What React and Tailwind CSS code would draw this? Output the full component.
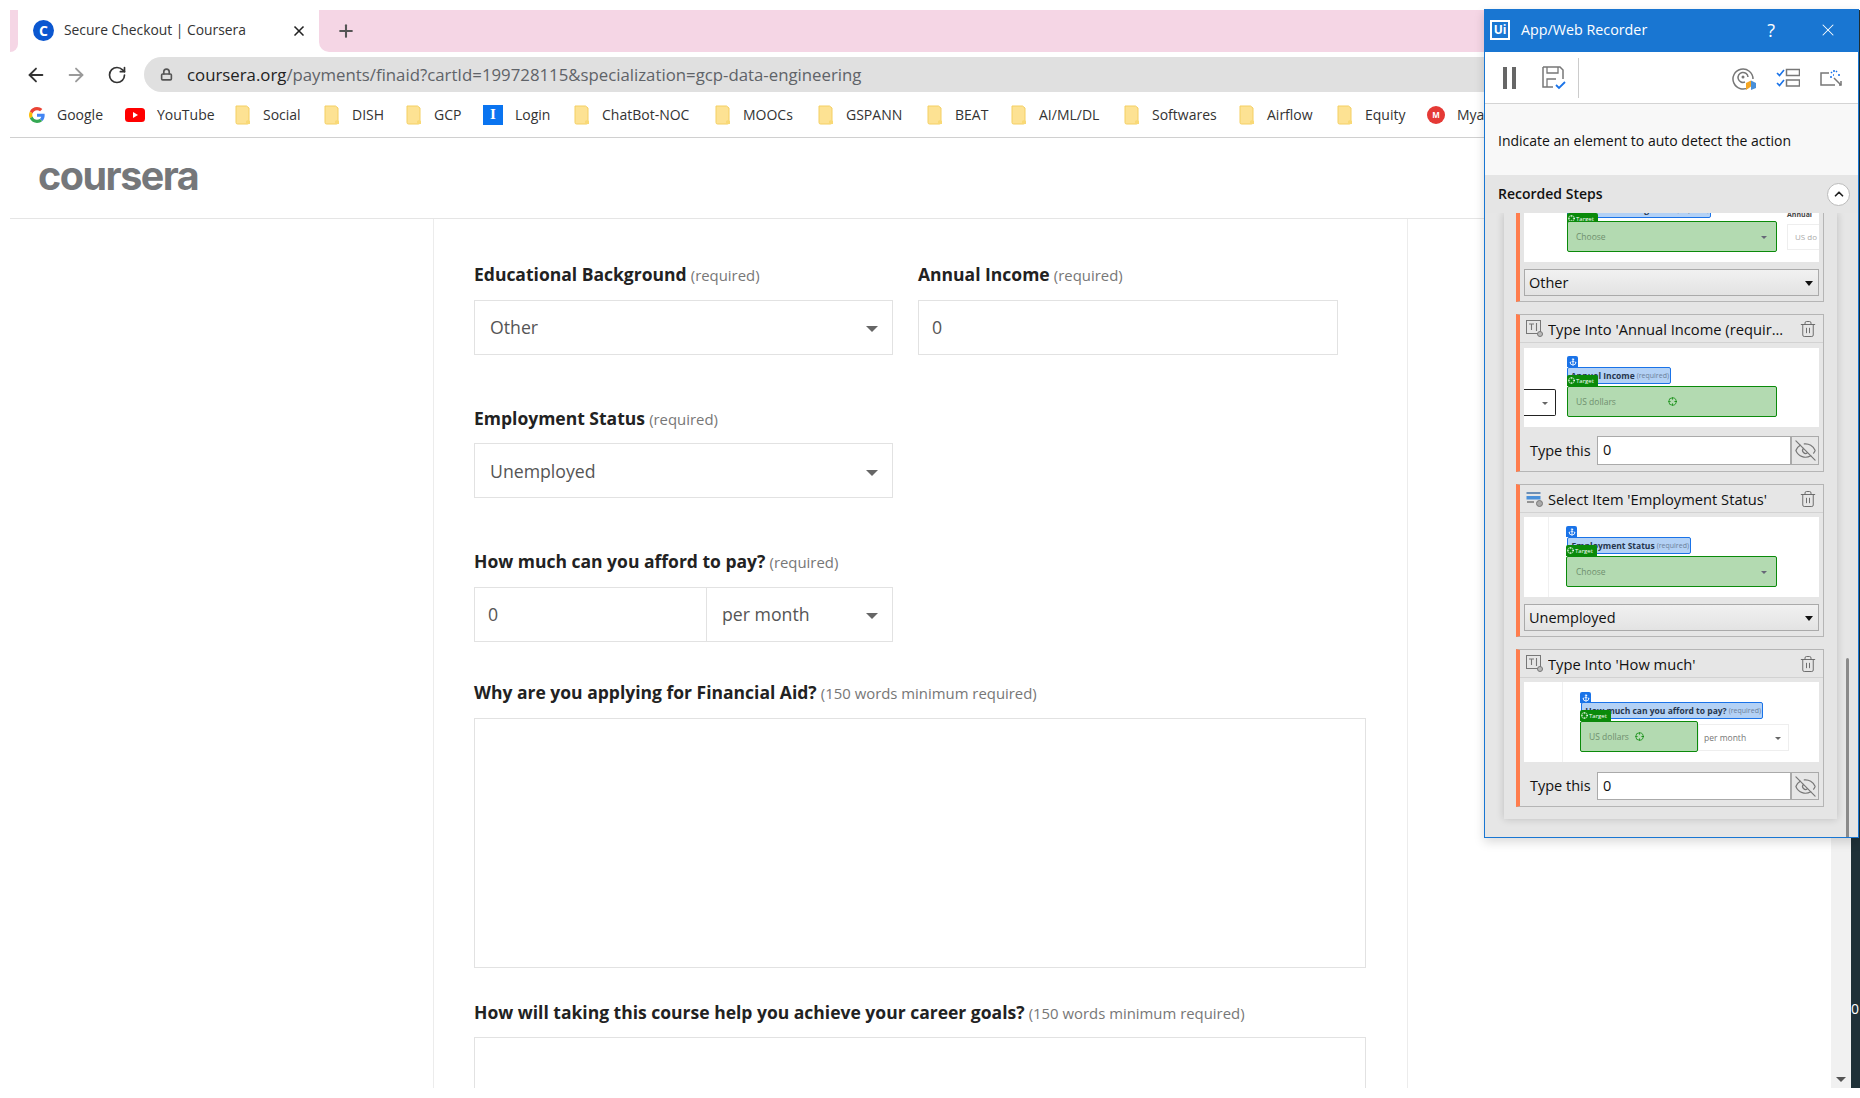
import React from 'react';
import { ArrowLeft, ArrowRight, RotateCw, Lock, X, Plus, Trash2, EyeOff, Anchor, ChevronUp, Crosshair } from 'lucide-react';

const Folder = () => (
  <svg width="16" height="20" viewBox="0 0 16 20" className="shrink-0">
    <path d="M1 1h10.500L14 3v14.500a1.500 1.500 0 0 1-1.500 1.500h-10A1.500 1.500 0 0 1 1 17.500z" fill="#fde293" stroke="#f4cf63" />
    <path d="M11 19v-3l2-1 2 1v3" fill="#f9d976" />
  </svg>
);

const GoogleIcon = () => (
  <svg width="16" height="16" viewBox="0 0 48 48" className="shrink-0">
    <path fill="#EA4335" d="M24 9.500c3.500 0 6.700 1.200 9.200 3.600l6.900-6.900C35.900 2.400 30.500 0 24 0 14.600 0 6.500 5.400 2.600 13.200l8 6.200C12.500 13.600 17.800 9.500 24 9.500z" />
    <path fill="#4285F4" d="M47 24.500c0-1.600-.1-3.100-.4-4.500H24v9h12.900c-.6 3-2.200 5.500-4.700 7.200l7.700 6C44.400 38 47 31.800 47 24.500z" />
    <path fill="#FBBC05" d="M10.600 28.600c-.5-1.400-.8-3-.8-4.600s.3-3.200.8-4.600l-8-6.200C.9 16.500 0 20.100 0 24s.9 7.500 2.600 10.800z" />
    <path fill="#34A853" d="M24 48c6.500 0 11.900-2.100 15.900-5.800l-7.700-6c-2.200 1.400-4.900 2.300-8.200 2.300-6.200 0-11.500-4.100-13.400-9.900l-8 6.200C6.500 42.600 14.600 48 24 48z" />
  </svg>
);

const YoutubeIcon = () => (
  <svg width="20" height="14" viewBox="0 0 20 14" className="shrink-0">
    <rect width="20" height="14" rx="3.500" fill="#f00" />
    <path d="M8 4l5 3-5 3z" fill="#fff" />
  </svg>
);

const LoginIcon = () => (
  <div className="w-[20px] h-[20px] shrink-0 bg-[#0a74f0] flex items-center justify-center text-white font-bold text-[15px] leading-none font-['Liberation_Serif',serif]">I</div>
);

const MyaIcon = () => (
  <div className="w-[18px] h-[18px] shrink-0 rounded-full bg-[#e53935] flex items-center justify-center text-white font-bold text-[8px] leading-none">M</div>
);

const bookmarks = [
  { label: 'Google', icon: <GoogleIcon />, box: 'w-[48px]', next: 'mr-[20px]' },
  { label: 'YouTube', icon: <YoutubeIcon />, box: 'w-[56px]', next: 'mr-[22px]' },
  { label: 'Social', icon: <Folder />, box: 'w-[38px]', next: 'mr-[23px]' },
  { label: 'DISH', icon: <Folder />, box: 'w-[32px]', next: 'mr-[22px]' },
  { label: 'GCP', icon: <Folder />, box: 'w-[27px]', next: 'mr-[22px]' },
  { label: 'Login', icon: <LoginIcon />, box: 'w-[36px]', next: 'mr-[23px]' },
  { label: 'ChatBot-NOC', icon: <Folder />, box: 'w-[90px]', next: 'mr-[23px]' },
  { label: 'MOOCs', icon: <Folder />, box: 'w-[51px]', next: 'mr-[24px]' },
  { label: 'GSPANN', icon: <Folder />, box: 'w-[58px]', next: 'mr-[23px]' },
  { label: 'BEAT', icon: <Folder />, box: 'w-[32px]', next: 'mr-[24px]' },
  { label: 'AI/ML/DL', icon: <Folder />, box: 'w-[63px]', next: 'mr-[22px]' },
  { label: 'Softwares', icon: <Folder />, box: 'w-[64px]', next: 'mr-[23px]' },
  { label: 'Airflow', icon: <Folder />, box: 'w-[46px]', next: 'mr-[24px]' },
  { label: 'Equity', icon: <Folder />, box: 'w-[41px]', next: 'mr-[21px]' },
  { label: 'Mya', icon: <MyaIcon />, box: 'w-[30px]', next: '' },
];

function BrowserChrome() {
  return (
    <div className="shrink-0">
      <div className="flex h-[42px] bg-white">
        <div className="w-[8px] bg-[#f5d6e5] rounded-br-[8px]" />
        <div className="w-[301px] bg-white rounded-t-[10px] flex items-center pl-[15px] pr-[12px] pb-[1px]">
          <div className="w-[21px] h-[21px] rounded-full bg-[#0b57d0] flex items-center justify-center text-white font-bold text-[14px] leading-none">C</div>
          <span className="ml-[10px] text-[13.850px] text-[#333] whitespace-nowrap flex-1">Secure Checkout | Coursera</span>
          <X size={16} strokeWidth={2.5} className="text-[#222]" />
        </div>
        <div className="flex-1 bg-[#f5d6e5] rounded-bl-[10px] flex items-center pl-[17px]">
          <Plus size={20} strokeWidth={2.5} className="text-[#555]" />
        </div>
      </div>
      <div className="flex items-center h-[40px] pt-[5px] bg-white">
        <ArrowLeft size={22} strokeWidth={2} className="ml-[15px] text-[#333]" />
        <ArrowRight size={22} strokeWidth={2} className="ml-[18px] text-[#9a9a9a]" />
        <RotateCw size={20} strokeWidth={2} className="ml-[20px] text-[#333]" />
        <div className="ml-[17px] flex-1 h-[35px] bg-[#e0e0e0] rounded-l-full flex items-center pl-[16px]">
          <Lock size={13} strokeWidth={3} className="text-[#555]" />
          <span className="ml-[14px] text-[16.800px] whitespace-nowrap text-[#5f6368]"><span className="text-[#222]">coursera.org</span>/payments/finaid?cartId=199728115&amp;specialization=gcp-data-engineering</span>
        </div>
      </div>
      <div className="flex items-center h-[46px] pl-[19px] bg-white border-b border-[#d0d0d0] overflow-hidden">
        {bookmarks.map((b) => (
          <div key={b.label} className={`flex items-center gap-[12px] shrink-0 ${b.next}`}>
            {b.icon}
            <span className={`text-[14px] text-[#333] whitespace-nowrap ${b.box}`}>{b.label}</span>
          </div>
        ))}
      </div>
    </div>
  );
}

const Caret = () => <div className="w-0 h-0 border-x-[6px] border-x-transparent border-t-[6px] border-t-[#666] mt-[2px]" />;

function FieldLabel({ title, note }) {
  return (
    <div className="h-[24px] leading-[22px] whitespace-nowrap">
      <span className="text-[17.500px] font-bold text-[#222]">{title}</span>{' '}
      <span className="text-[14.900px] text-[#777]">{note}</span>
    </div>
  );
}

function SelectBox({ value, className }) {
  return (
    <div className={`h-[55px] border border-[#e2e2e2] flex items-center justify-between pl-[15px] pr-[14px] text-[17.700px] text-[#555] ${className}`}>
      <span>{value}</span>
      <Caret />
    </div>
  );
}

function TextBox({ value, className }) {
  return <div className={`h-[55px] border border-[#e2e2e2] flex items-center pl-[13px] text-[17.700px] text-[#555] ${className}`}>{value}</div>;
}

function FormPage() {
  return (
    <div className="flex-1 flex min-h-0">
      <div className="flex-1 min-w-0 flex-col flex">
        <div className="h-[81px] shrink-0 border-b border-[#e5e5e5] flex items-center pl-[28px] pb-[3px]">
          <span className="text-[39.500px] leading-none font-bold text-[#75777a] tracking-[-1.500px] font-['Inter',sans-serif]">coursera</span>
        </div>
        <div className="flex-1 min-h-0 overflow-hidden ml-[423px] w-[975px] border-x border-[#ececec] pl-[40px] pt-[44px] font-['Open_Sans',sans-serif]">
          <div className="flex gap-[25px]">
            <div className="w-[419px]">
              <FieldLabel title="Educational Background" note="(required)" />
              <SelectBox value="Other" className="mt-[13px]" />
            </div>
            <div className="w-[420px]">
              <FieldLabel title="Annual Income" note="(required)" />
              <TextBox value="0" className="mt-[13px]" />
            </div>
          </div>
          <div className="w-[419px] mt-[52px]">
            <FieldLabel title="Employment Status" note="(required)" />
            <SelectBox value="Unemployed" className="mt-[12px] pt-[2px]" />
          </div>
          <div className="w-[419px] mt-[52px]">
            <FieldLabel title="How much can you afford to pay?" note="(required)" />
            <div className="flex mt-[13px]">
              <TextBox value="0" className="w-[233px]" />
              <SelectBox value="per month" className="flex-1 border-l-0" />
            </div>
          </div>
          <div className="mt-[39px]">
            <FieldLabel title="Why are you applying for Financial Aid?" note="(150 words minimum required)" />
            <div className="mt-[13px] w-[892px] h-[250px] border border-[#e2e2e2]" />
          </div>
          <div className="mt-[33px]">
            <FieldLabel title="How will taking this course help you achieve your career goals?" note="(150 words minimum required)" />
            <div className="mt-[12px] w-[892px] h-[60px] border-x border-t border-[#e2e2e2]" />
          </div>
        </div>
      </div>
      <div className="w-[20px] shrink-0 bg-[#f1f1f1] flex flex-col justify-end items-center pb-[6px]">
        <div className="w-0 h-0 border-x-[5px] border-x-transparent border-t-[5px] border-t-[#555]" />
      </div>
    </div>
  );
}

// thumbnail pieces, these are a little picture so they sit at fixed spots
const TargetTag = ({ className }) => (
  <div className={`absolute w-[31px] h-[11px] bg-[#0a8a0a] rounded-t-[2px] flex items-center gap-[1px] pl-[1px] text-[6px] leading-none text-white whitespace-nowrap ${className}`}>
    <Crosshair size={7} strokeWidth={2} className="shrink-0" />
    <span>Target</span>
  </div>
);

const AnchorTag = ({ className }) => (
  <div className={`absolute w-[11px] h-[11px] bg-[#1a73e8] rounded-t-[2px] flex items-center justify-center text-white ${className}`}>
    <Anchor size={8} strokeWidth={2.5} />
  </div>
);

const BlueLabel = ({ className, bold, note }) => (
  <div className={`absolute h-[17px] bg-[#b3d1f5] border border-[#1a73e8] rounded-[2px] flex items-start pt-[2px] justify-end pr-[1px] text-[8.500px] leading-[11px] whitespace-nowrap overflow-hidden ${className}`}>
    <span className="font-bold text-[#26364d]">{bold}</span>
    <span className="ml-[2px] text-[7px] text-[#6b7f9a]">{note}</span>
  </div>
);

const GreenBox = ({ className, children }) => (
  <div className={`absolute bg-[#b3dab1] border border-[#0a8a0a] rounded-[2px] flex items-center pt-[2px] text-[8.500px] text-[#6f8f6e] ${className}`}>{children}</div>
);

const GreenCaret = () => <div className="absolute right-[9px] top-[14px] w-0 h-0 border-x-[3px] border-x-transparent border-t-[3px] border-t-[#667]" />;

const Thumb = ({ className, children }) => <div className={`relative mx-[4px] bg-white overflow-hidden ${className}`}>{children}</div>;

const NativeSelect = ({ value }) => (
  <div className="mx-[4px] mt-[7px] mb-[5px] h-[27px] border border-[#aaa] bg-gradient-to-b from-[#f1f1f1] to-[#e3e3e3] flex items-center justify-between pl-[4px] pr-[5px] pt-[1px] text-[14.500px] text-[#111]">
    <span>{value}</span>
    <div className="w-0 h-0 border-x-[4px] border-x-transparent border-t-[5px] border-t-[#111]" />
  </div>
);

const TypeThis = ({ className }) => (
  <div className={`flex items-center mb-[6px] mx-[4px] pl-[6px] ${className}`}>
    <span className="w-[67px] text-[14.500px] text-[#111]">Type this</span>
    <div className="flex-1 h-full bg-white border border-[#aaa] pl-[5px] text-[14.500px] leading-[25px] text-[#111]">0</div>
    <div className="w-[28px] h-full border border-[#aaa] flex items-center justify-center text-[#777]">
      <EyeOff size={23} strokeWidth={1.25} />
    </div>
  </div>
);

const TypeIcon = () => (
  <svg width="17" height="17" viewBox="0 0 17 17" fill="none" stroke="#777" className="shrink-0">
    <rect x="0.500" y="0.500" width="14" height="13" />
    <path d="M3 4h5M5.500 4v6M10.500 3v8" strokeWidth="1.100" />
    <circle cx="14" cy="14" r="2.500" fill="#bbb" />
  </svg>
);

const SelectIcon = () => (
  <svg width="17" height="16" viewBox="0 0 17 16" fill="none" className="shrink-0">
    <rect x="0.500" y="1" width="14" height="2" fill="#6d8fb5" />
    <rect x="0.500" y="5" width="14" height="3.500" fill="#4a90d9" />
    <path d="M1 11h7" stroke="#777" strokeWidth="1.500" />
    <circle cx="13.500" cy="12.500" r="3" fill="#aaa" stroke="#777" />
  </svg>
);

function Step({ icon, title, className, children }) {
  return (
    <div className={`border border-[#b5b5b5] border-l-[4px] border-l-[#ff7d4d] bg-[#e6e6e6] ${className}`}>
      <div className="h-[28px] border-b border-[#d2d2d2] flex items-center pl-[6px] pr-[6px]">
        {icon}
        <span className="ml-[5px] pt-[1px] flex-1 text-[14.700px] text-[#111] whitespace-nowrap overflow-hidden">{title}</span>
        <Trash2 size={18} strokeWidth={1.25} className="text-[#666]" />
      </div>
      {children}
    </div>
  );
}

function Recorder() {
  return (
    <div className="absolute left-[1484px] top-[9px] w-[375px] h-[829px] border border-[#1976d2] bg-[#e6e6e6] flex flex-col font-['Open_Sans',sans-serif] shadow-[0_4px_10px_rgba(0,0,0,0.15)]">
      <div className="h-[42px] shrink-0 bg-[#1976d2] flex items-center text-white pb-[2px]">
        <div className="ml-[5px] w-[20px] h-[20px] border-2 border-white flex items-center justify-center text-[12px] font-bold leading-none">Ui</div>
        <span className="ml-[11px] text-[14.300px] flex-1 whitespace-nowrap">App/Web Recorder</span>
        <span className="text-[18px] mr-[43px]">?</span>
        <X size={20} strokeWidth={1.25} className="mr-[20px]" />
      </div>
      <div className="h-[52px] shrink-0 bg-white border-b border-[#d4d4d4] flex items-center">
        <div className="ml-[18px] flex gap-[5px]">
          <div className="w-[4px] h-[22px] bg-[#666]" />
          <div className="w-[4px] h-[22px] bg-[#666]" />
        </div>
        <svg width="24" height="24" viewBox="0 0 24 24" fill="none" className="ml-[26px]">
          <path d="M1 1h17l3 3v9M1 1v20h10" stroke="#777" strokeWidth="1.500" />
          <path d="M5 1v6h11V1M5 21v-8h9" stroke="#777" strokeWidth="1.300" />
          <path d="M14 19l3 3 6-6" stroke="#1a73e8" strokeWidth="1.800" />
        </svg>
        <div className="ml-[12px] w-px h-[40px] bg-[#ccc]" />
        <svg width="24" height="24" viewBox="0 0 24 24" fill="none" className="ml-[153px]">
          <path d="M17 21a10 10 0 1 1 4-8" stroke="#777" strokeWidth="1.500" />
          <path d="M13 16a5 5 0 1 1 3-5" stroke="#777" strokeWidth="1.500" />
          <circle cx="11" cy="11" r="1.500" fill="#777" />
          <path d="M14 17l5-2.500v6L14 24z" fill="#f5a623" />
          <path d="M19 14.500l5 2.500v5l-5 2z" fill="#4a90d9" />
        </svg>
        <svg width="24" height="20" viewBox="0 0 24 20" fill="none" className="ml-[20px]">
          <path d="M1 5l2.500 2.500L8 2M1 15l2.500 2.500L8 12" stroke="#1a73e8" strokeWidth="1.600" />
          <rect x="10.500" y="1.500" width="13" height="6" stroke="#777" strokeWidth="1.500" />
          <rect x="10.500" y="12" width="13" height="6" stroke="#777" strokeWidth="1.500" />
        </svg>
        <svg width="24" height="20" viewBox="0 0 24 20" fill="none" className="ml-[20px]">
          <path d="M9 5H1v12h14M21 13v4h-2" stroke="#777" strokeWidth="1.500" />
          <path d="M14 10l7 7" stroke="#777" strokeWidth="1.500" />
          <path d="M10 9h2M14 2v2M18 7h2M11 4l1 1M17 3l-1 1M13 7h1" stroke="#1a73e8" strokeWidth="1.500" />
        </svg>
      </div>
      <div className="h-[71px] shrink-0 bg-[#f8f8f8] flex items-center pl-[13px] pt-[1px] text-[14px] text-[#111] whitespace-nowrap">Indicate an element to auto detect the action</div>
      <div className="h-[38px] shrink-0 bg-[#e5e5e5] flex items-center justify-between pl-[13px] pr-[8px]">
        <span className="text-[14px] font-semibold text-[#111] mb-[2px]">Recorded Steps</span>
        <div className="w-[23px] h-[23px] rounded-full bg-white border border-[#bbb] flex items-center justify-center">
          <ChevronUp size={14} strokeWidth={3} className="text-[#222]" />
        </div>
      </div>
      <div className="flex-1 min-h-0 flex overflow-hidden">
        <div className="ml-[19px] w-[333px] h-[606px] bg-[#e5e5e5] shadow-[0_0_8px_rgba(0,0,0,0.18)] pl-[12px] pr-[13px]">
          <div className="border border-t-0 border-[#b5b5b5] border-l-[4px] border-l-[#ff7d4d]">
            <Thumb className="h-[49px]">
              <BlueLabel className="left-[43px] top-[-12px] w-[144px]" bold="Educational Background" note="(required)" />
              <TargetTag className="left-[43px] top-0 h-[8px]" />
              <GreenBox className="left-[43px] top-[8px] w-[210px] h-[31px] pl-[8px]">Choose<GreenCaret /></GreenBox>
              <div className="absolute left-[263px] top-[11px] w-[40px] h-[26px] border border-[#eee] pl-[7px] text-[8px] leading-[24px] text-[#aaa]">US do</div>
              <div className="absolute left-[263px] top-0 text-[7px] leading-[4px] font-bold text-[#444]">Annual</div>
            </Thumb>
            <NativeSelect value="Other" />
          </div>
          <Step icon={<TypeIcon />} title="Type Into 'Annual Income (requir..." className="mt-[12px]">
            <Thumb className="h-[79px] mt-[5px]">
              <div className="absolute left-0 top-[41px] w-[32px] h-[27px] border border-[#222] border-l-0 rounded-r-[2px]">
                <div className="absolute right-[7px] top-[12px] w-0 h-0 border-x-[3px] border-x-transparent border-t-[3px] border-t-[#666]" />
              </div>
              <AnchorTag className="left-[43px] top-[8px]" />
              <BlueLabel className="left-[43px] top-[19px] w-[104px]" bold="Annual Income" note="(required)" />
              <TargetTag className="left-[43px] top-[27px]" />
              <GreenBox className="left-[43px] top-[38px] w-[210px] h-[31px] pl-[8px]">
                US dollars
                <Crosshair size={9} className="absolute left-[100px] top-[10px] text-[#0a8a0a]" />
              </GreenBox>
            </Thumb>
            <TypeThis className="h-[29px] mt-[9px]" />
          </Step>
          <Step icon={<SelectIcon />} title="Select Item 'Employment Status'" className="mt-[12px]">
            <Thumb className="h-[80px] mt-[4px]">
              <div className="absolute left-[24px] top-0 h-full w-px bg-[#f0f0f0]" />
              <AnchorTag className="left-[42px] top-[9px]" />
              <BlueLabel className="left-[43px] top-[20px] w-[124px]" bold="Employment Status" note="(required)" />
              <TargetTag className="left-[42px] top-[28px]" />
              <GreenBox className="left-[42px] top-[39px] w-[211px] h-[31px] pl-[9px]">Choose<GreenCaret /></GreenBox>
            </Thumb>
            <NativeSelect value="Unemployed" />
          </Step>
          <Step icon={<TypeIcon />} title="Type Into 'How much'" className="mt-[12px]">
            <Thumb className="h-[80px] mt-[4px]">
              <div className="absolute left-[38px] top-0 h-full w-px bg-[#f0f0f0]" />
              <AnchorTag className="left-[56px] top-[10px]" />
              <BlueLabel className="left-[57px] top-[20px] w-[182px]" bold="How much can you afford to pay?" note="(required)" />
              <TargetTag className="left-[56px] top-[28px]" />
              <GreenBox className="left-[56px] top-[39px] w-[118px] h-[31px] pl-[8px]">
                US dollars
                <Crosshair size={9} className="absolute left-[54px] top-[10px] text-[#0a8a0a]" />
              </GreenBox>
              <div className="absolute left-[174px] top-[42px] w-[91px] h-[27px] border border-[#eee] pl-[5px] text-[8.500px] leading-[25px] text-[#777]">per month
                <div className="absolute right-[7px] top-[12px] w-0 h-0 border-x-[3px] border-x-transparent border-t-[3px] border-t-[#666]" />
              </div>
            </Thumb>
            <TypeThis className="h-[28px] mt-[10px]" />
          </Step>
        </div>
        <div className="ml-[9px] mt-[445px] w-[3px] h-[180px] rounded-full bg-[#8a8a8a]" />
      </div>
    </div>
  );
}

export default function App() {
  return (
    <div className="relative w-[1860px] h-[1098px] overflow-hidden bg-white flex font-['Open_Sans',sans-serif]">
      <div className="w-[1851px] shrink-0 pl-[10px] pt-[10px] pb-[10px] flex flex-col">
        <BrowserChrome />
        <FormPage />
      </div>
      <div className="flex-1 my-[10px] bg-[#1f3138] flex flex-col justify-end pb-[72px] text-[14px] text-white leading-none overflow-hidden">0</div>
      <Recorder />
    </div>
  );
}
